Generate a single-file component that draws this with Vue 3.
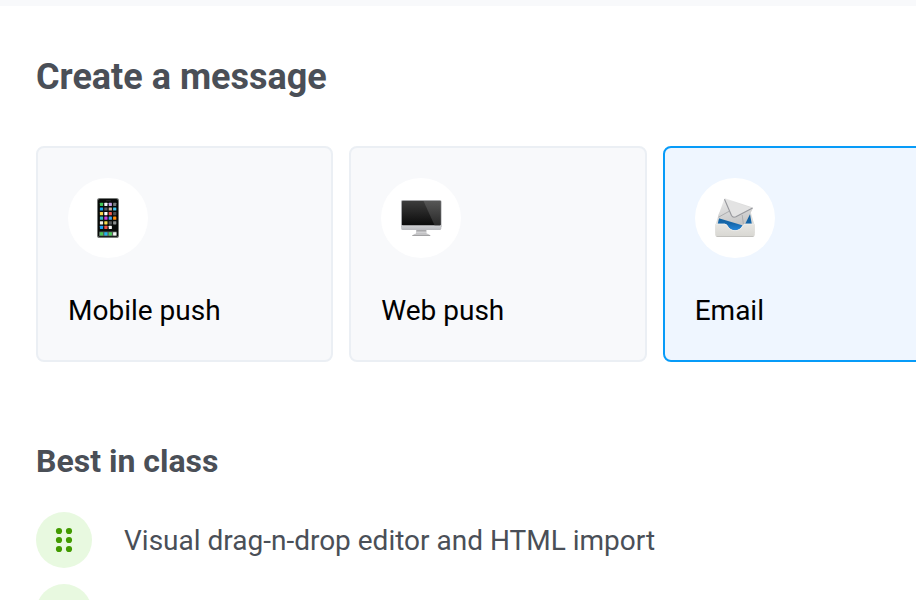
<script setup>
import { ref } from 'vue'

const channels = [
  { id: 'mobile', label: 'Mobile push' },
  { id: 'web', label: 'Web push' },
  { id: 'email', label: 'Email' },
]
const selected = ref('email')

// App tiles on the phone's screen, row by row
const tileRows = [
  ['#3fc65a', '#f4f4f8', '#c5a0e8', '#777b7b'],
  ['#17a3ef', '#55595c', '#cdb49a', '#45c8ef'],
  ['#f7d44c', '#ffffff', '#f0564a', '#4b4d50'],
  ['#35b9c4', '#c83fe0', '#3aa5ee', '#ff8c0a'],
  ['#f2eee4', '#f7dc4c', '#55585a', '#8b8e8e'],
  ['#1e9df0', '#ee4e44', '#f6f6f6'],
]
const dock = ['#48ca58', '#22b5ee', '#4ccf5c', '#f4f4f4']
</script>

<template>
  <div class="page">
    <div class="topbar"></div>
    <main class="content">
      <h1 class="title">Create a message</h1>

      <div class="cards">
        <button
          v-for="c in channels"
          :key="c.id"
          type="button"
          class="card"
          :class="{ active: selected === c.id }"
          :aria-pressed="selected === c.id"
          @click="selected = c.id"
        >
          <span class="badge">
            <svg v-if="c.id === 'mobile'" class="icon" viewBox="0 0 40 40" aria-hidden="true">
              <rect x="9" y="0" width="22" height="40" rx="2.6" fill="#777a78" />
              <rect x="10" y="1" width="20" height="38" rx="1.8" fill="#090b0a" />
              <rect x="18" y="2.2" width="5" height="1" rx=".5" fill="#292b2b" />
              <g v-for="(row, r) in tileRows" :key="r">
                <rect
                  v-for="(color, i) in row"
                  :key="i"
                  :x="11.9 + i * 4.4"
                  :y="4.8 + r * 4.6"
                  width="3.2"
                  height="3.2"
                  rx=".4"
                  :fill="color"
                />
              </g>
              <rect x="11" y="33.4" width="18" height="4.8" rx=".8" fill="#55605a" />
              <rect
                v-for="(color, i) in dock"
                :key="color"
                :x="11.9 + i * 4.4"
                y="34.2"
                width="3.2"
                height="3.2"
                rx=".4"
                :fill="color"
              />
            </svg>

            <svg v-else-if="c.id === 'web'" class="icon" viewBox="0 0 40 40" aria-hidden="true">
              <defs>
                <linearGradient id="screen" x1="0" y1="0" x2="0" y2="1">
                  <stop offset="0" stop-color="#3c3c3c" />
                  <stop offset="1" stop-color="#0b0b0b" />
                </linearGradient>
                <linearGradient id="glare" x1="0" y1="0" x2="0" y2="1">
                  <stop offset="0" stop-color="#565656" />
                  <stop offset="1" stop-color="#292929" />
                </linearGradient>
                <linearGradient id="chin" x1="0" y1="0" x2="0" y2="1">
                  <stop offset="0" stop-color="#d2d3d6" />
                  <stop offset="1" stop-color="#b9babe" />
                </linearGradient>
                <linearGradient id="stand" x1="0" y1="0" x2="0" y2="1">
                  <stop offset="0" stop-color="#8b8b8e" />
                  <stop offset=".7" stop-color="#d8d8da" />
                  <stop offset="1" stop-color="#a5a5a8" />
                </linearGradient>
              </defs>
              <path d="M15.4 31h9.8l.6 5.5h-11z" fill="url(#stand)" />
              <path d="M14 35.7h12.8l2.4 1.6v.6H11.4v-.6z" fill="#c4c4c6" />
              <path d="M11.4 37.2h17.8v.7H11.4z" fill="#949496" />
              <rect x="0" y="2" width="40.5" height="28" rx="1.8" fill="#a6a7aa" />
              <path d="M.2 27h40.1v3.4q0 1.6-1.6 1.6H1.8Q.2 32 .2 30.4z" fill="url(#chin)" />
              <rect x="1" y="3" width="38.5" height="24.2" rx=".6" fill="url(#screen)" />
              <path d="M22.5 3h17v24.2H33.5z" fill="url(#glare)" />
            </svg>

            <svg v-else class="icon" viewBox="0 0 40 40" aria-hidden="true">
              <defs>
                <linearGradient id="paper" x1="0" y1="0" x2=".3" y2="1">
                  <stop offset="0" stop-color="#ececec" />
                  <stop offset="1" stop-color="#c6c6c6" />
                </linearGradient>
                <linearGradient id="tray" x1="0" y1="0" x2="0" y2="1">
                  <stop offset="0" stop-color="#e7e6e3" />
                  <stop offset="1" stop-color="#d8d7d2" />
                </linearGradient>
                <linearGradient id="inside" x1="0" y1="0" x2="0" y2="1">
                  <stop offset="0" stop-color="#155b94" />
                  <stop offset=".5" stop-color="#1668ac" />
                  <stop offset="1" stop-color="#2b98f5" />
                </linearGradient>
              </defs>
              <path d="M4.2 14.5h31.6L39.5 27v8H.5v-8z" fill="#dcdcda" />
              <path d="M5.2 15h29.6L37 27l-8 9H11L2.5 27z" fill="url(#inside)" />
              <path d="M9.2 1.2q.3-1.2 1.500-.8l26.300 8.800q1.200.5.7 1.500L30 26.200q-.6 1.500-2 1.200L3.800 20.200q-1.200-.4-.8-1.600z" fill="url(#paper)" />
              <path d="M3.500 19.200 14.600 13M28.500 27 27.200 17" fill="none" stroke="#a8a9ab" stroke-width=".9" />
              <path d="M9.500 1.300 16.500 17.500q1.400 2.600 4.400 1.300L37.600 9.900" fill="#e3e3e3" stroke="#97989d" stroke-width="1.100" />
              <path d="M1.200 25.800h8.500q2 0 3 2 2.400 4.400 7.300 4.400t7.300-4.400q1-2 3-2h8.500q1 0 1 1v10q0 2-2 2H2.200q-2 0-2-2v-10q0-1 1-1z" fill="url(#tray)" />
              <path d="M1 26.200h8.700q1.700 0 2.700 2 2.400 4.500 7.600 4.500t7.600-4.500q1-2 2.700-2H39" fill="none" stroke="#f0efec" stroke-width=".8" />
              <path d="M1 38.100q.5.700 1.200.7h35.600q.7 0 1.200-.7z" fill="#b8b7b3" />
            </svg>
          </span>
          <span>{{ c.label }}</span>
        </button>
      </div>

      <h2 class="subtitle">Best in class</h2>
      <ul class="features">
        <li class="feature">
          <span class="bullet">
            <svg class="dots" viewBox="0 0 24 24" aria-hidden="true">
              <g fill="#429b00">
                <circle cx="7" cy="3" r="3.1" />
                <circle cx="17" cy="3" r="3.1" />
                <circle cx="7" cy="12" r="3.1" />
                <circle cx="17" cy="12" r="3.1" />
                <circle cx="7" cy="21" r="3.1" />
                <circle cx="17" cy="21" r="3.1" />
              </g>
            </svg>
          </span>
          <span class="text">Visual drag-n-drop editor and HTML import</span>
        </li>
        <li class="feature">
          <span class="bullet"></span>
        </li>
      </ul>
    </main>
  </div>
</template>

<style>
body {
  background: #fff;
}
</style>

<style scoped>
.page {
  max-height: 100vh;
  overflow: hidden;
  font-family: Roboto, "Liberation Sans", sans-serif;
  color: #4a4f57;
}
.topbar {
  height: 6px;
  background: #f8f9fb;
}
.content {
  padding: 48px 36px 0;
}
.title {
  margin: 0 0 46px;
  font-size: 36px;
  line-height: 46px;
  font-weight: 700;
}
/* The row of cards runs past the right edge of the window */
.cards {
  display: grid;
  grid-template-columns: repeat(3, 1fr);
  gap: 16px;
  margin-right: -80px;
}
.card {
  display: flex;
  flex-direction: column;
  align-items: flex-start;
  gap: 32px;
  padding: 30px 30px 28px;
  border: 2px solid #ebeff4;
  border-radius: 8px;
  background: #f8f9fb;
  color: #000;
  font-family: inherit;
  font-size: 28px;
  line-height: 42px;
  text-align: left;
  cursor: pointer;
}
.card.active {
  border-color: #079bf8;
  background: #eff6ff;
}
.badge {
  display: flex;
  align-items: center;
  justify-content: center;
  width: 80px;
  height: 80px;
  border-radius: 50%;
  background: #fff;
}
.icon {
  width: 40px;
  height: 40px;
  overflow: visible;
}
.subtitle {
  margin: 80px 0 32px;
  font-size: 32px;
  line-height: 38px;
  font-weight: 700;
}
.features {
  display: flex;
  flex-direction: column;
  gap: 16px;
  margin: 0;
  padding: 0;
  list-style: none;
}
.feature {
  display: flex;
  align-items: center;
  gap: 32px;
  font-size: 28px;
  line-height: 42px;
}
.text {
  padding-top: 2px;
}
.bullet {
  display: flex;
  align-items: center;
  justify-content: center;
  width: 56px;
  height: 56px;
  border-radius: 50%;
  background: #e8f9e0;
}
.dots {
  width: 24px;
  height: 24px;
  overflow: visible;
}
</style>
